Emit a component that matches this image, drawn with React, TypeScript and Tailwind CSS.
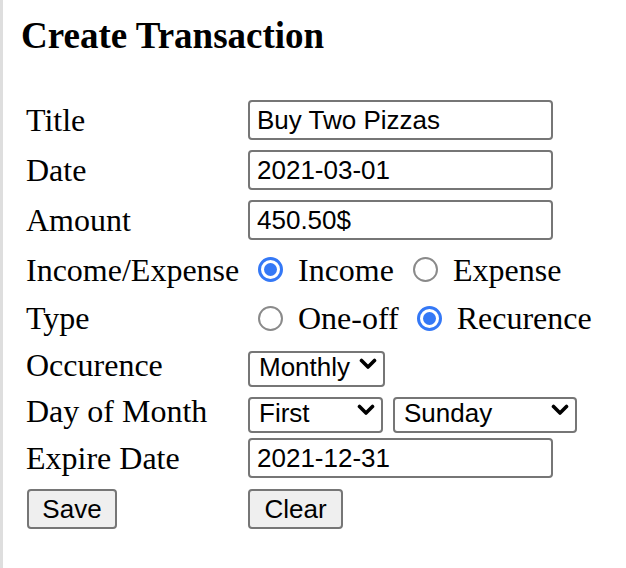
import { useState } from 'react'

function Chevron() {
	return (
		<svg width="18" height="12" viewBox="0 0 18 12" fill="none" stroke="black" strokeWidth={3.6} strokeLinecap="round" strokeLinejoin="round">
			<path d="M2.5 2.5 L9 9 L15.5 2.5" />
		</svg>
	)
}

function Radio({ checked }: { checked: boolean }) {
	if (checked) {
		return (
			<span className="flex h-[25px] w-[25px] shrink-0 items-center justify-center rounded-full border-[3px] border-[#3478f6] bg-white">
				<span className="h-[13px] w-[13px] rounded-full bg-[#3478f6]" />
			</span>
		)
	}
	return <span className="h-[25px] w-[25px] shrink-0 rounded-full border-2 border-[#8a8a8a] bg-white" />
}

function Select({ value, options, width }: { value: string; options: string[]; width: string }) {
	return (
		<div className={`relative h-[36px] ${width}`}>
			<select
				defaultValue={value}
				className="h-full w-full appearance-none rounded-[4px] border-2 border-[#767676] bg-white pb-[3px] pl-[9px] font-['Liberation_Sans',Arial,sans-serif] text-[26px] leading-[28px] text-black outline-none"
			>
				{options.map((o) => (
					<option key={o}>{o}</option>
				))}
			</select>
			<span className="pointer-events-none absolute right-[8px] top-[11px]">
				<Chevron />
			</span>
		</div>
	)
}

const inputCls =
	"h-[40px] w-[305px] rounded-[4px] border-2 border-[#767676] bg-white px-[7px] font-['Liberation_Sans',Arial,sans-serif] text-[26px] text-black outline-none"

export default function App() {
	const [kind, setKind] = useState('income')
	const [type, setType] = useState('recurence')

	return (
		<div className="min-h-screen border-l-[3px] border-[#dedede] bg-white pl-[18px] pt-[14px] font-['Liberation_Serif','Times_New_Roman',serif] text-black">
			<h3 className="text-[37px] font-bold leading-[43px]">Create Transaction</h3>
			<div className="ml-[5px] mt-[38px] flex flex-col text-[32px] leading-[36px]">
				<div className="flex h-[50px] items-center">
					<div className="w-[222px]">Title</div>
					<input className={inputCls} defaultValue="Buy Two Pizzas" />
				</div>
				<div className="flex h-[50px] items-center">
					<div className="w-[222px]">Date</div>
					<input className={inputCls} defaultValue="2021-03-01" />
				</div>
				<div className="flex h-[50px] items-center">
					<div className="w-[222px]">Amount</div>
					<input className={inputCls} defaultValue="450.50$" />
				</div>
				<div className="flex h-[49px] items-center">
					<div className="w-[222px]">Income/Expense</div>
					<label className="ml-[10px] flex items-center" onClick={() => setKind('income')}>
						<Radio checked={kind === 'income'} />
						<span className="ml-[15px]">Income</span>
					</label>
					<label className="ml-[19px] flex items-center" onClick={() => setKind('expense')}>
						<Radio checked={kind === 'expense'} />
						<span className="ml-[15px]">Expense</span>
					</label>
				</div>
				<div className="flex h-[48px] items-center">
					<div className="w-[222px]">Type</div>
					<label className="ml-[10px] flex items-center" onClick={() => setType('oneoff')}>
						<Radio checked={type === 'oneoff'} />
						<span className="ml-[15px]">One-off</span>
					</label>
					<label className="ml-[18px] flex items-center" onClick={() => setType('recurence')}>
						<Radio checked={type === 'recurence'} />
						<span className="ml-[15px]">Recurence</span>
					</label>
				</div>
				<div className="flex h-[46px] items-center">
					<div className="w-[222px]">Occurence</div>
					<Select value="Monthly" options={['Daily', 'Weekly', 'Monthly', 'Yearly']} width="w-[137px]" />
				</div>
				<div className="flex h-[46px] items-center">
					<div className="w-[222px]">Day of Month</div>
					<Select value="First" options={['First', 'Second', 'Third', 'Fourth', 'Last']} width="w-[135px]" />
					<div className="ml-[10px]">
						<Select
							value="Sunday"
							options={['Sunday', 'Monday', 'Tuesday', 'Wednesday', 'Thursday', 'Friday', 'Saturday']}
							width="w-[184px]"
						/>
					</div>
				</div>
				<div className="flex h-[48px] items-center">
					<div className="w-[222px]">Expire Date</div>
					<input className={inputCls} defaultValue="2021-12-31" />
				</div>
				<div className="flex h-[54px] items-center">
					<div className="w-[222px]">
						<button className="ml-[1px] h-[40px] w-[90px] rounded-[4px] border-2 border-[#767676] bg-[#efefef] font-['Liberation_Sans',Arial,sans-serif] text-[26px] text-black">
							Save
						</button>
					</div>
					<button className="h-[40px] w-[95px] rounded-[4px] border-2 border-[#767676] bg-[#efefef] font-['Liberation_Sans',Arial,sans-serif] text-[26px] text-black">
						Clear
					</button>
				</div>
			</div>
		</div>
	)
}
